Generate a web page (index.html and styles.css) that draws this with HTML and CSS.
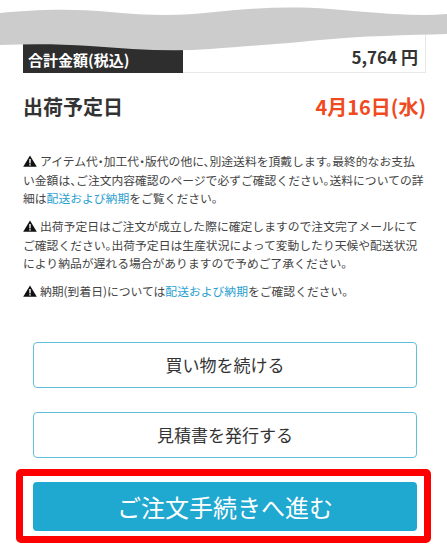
FILE: index.html
```html
<!DOCTYPE html>
<html lang="ja">
<head>
<meta charset="utf-8">
<title>カート</title>
<link rel="stylesheet" href="styles.css">
</head>
<body>
<div class="page">
  <div class="total-row">
    <div class="total-label">合計金額(税込)</div>
    <div class="total-value">5,764 円</div>
  </div>
  <div class="ship-row">
    <div class="ship-label">出荷予定日</div>
    <div class="ship-date">4月16日(水)</div>
  </div>
  <div class="notes">
    <p class="note"><svg class="warn" viewBox="0 0 14 12"><path d="M7 0.4 L13.8 11.8 H0.2 Z" fill="#111"/><rect x="6.3" y="4" width="1.4" height="4.4" fill="#fff"/><rect x="6.3" y="9.2" width="1.4" height="1.4" fill="#fff"/></svg>アイテム代・加工代・版代の他に、別途送料を頂戴します。最終的なお支払<br>い金額は、ご注文内容確認のページで必ずご確認ください。送料についての詳<br>細は<a class="link" href="#">配送および納期</a>をご覧ください。</p>
    <p class="note"><svg class="warn" viewBox="0 0 14 12"><path d="M7 0.4 L13.8 11.8 H0.2 Z" fill="#111"/><rect x="6.3" y="4" width="1.4" height="4.4" fill="#fff"/><rect x="6.3" y="9.2" width="1.4" height="1.4" fill="#fff"/></svg>出荷予定日はご注文が成立した際に確定しますので注文完了メールにて<br>ご確認ください。出荷予定日は生産状況によって変動したり天候や配送状況<br>により納品が遅れる場合がありますので予めご了承ください。</p>
    <p class="note"><svg class="warn" viewBox="0 0 14 12"><path d="M7 0.4 L13.8 11.8 H0.2 Z" fill="#111"/><rect x="6.3" y="4" width="1.4" height="4.4" fill="#fff"/><rect x="6.3" y="9.2" width="1.4" height="1.4" fill="#fff"/></svg>納期(到着日)については<a class="link" href="#">配送および納期</a>をご確認ください。</p>
  </div>
  <div class="actions">
    <button class="btn btn-outline">買い物を続ける</button>
    <button class="btn btn-outline">見積書を発行する</button>
    <button class="btn btn-primary">ご注文手続きへ進む</button>
  </div>
  <svg class="wave" viewBox="0 0 447 60" preserveAspectRatio="none">
    <path d="M0 13 C30 10 70 8 110 12 C150 16 180 16 215 12 C250 8 290 6 330 9 C370 12 410 17 447 14 L447 34 C410 35 360 36 320 40 C280 44 250 46 210 49 C170 52 130 49 90 46 C60 44 30 44 0 45 Z" fill="#cccccc"/>
  </svg>
  <div class="highlight"></div>
</div>
</body>
</html>
```

FILE: styles.css
```css
html, body {
  margin: 0;
  padding: 0;
  background: #ffffff;
}

body {
  font-family: "Noto Sans CJK JP", "Noto Sans", sans-serif;
  color: #333333;
}

.page {
  position: relative;
  width: 447px;
  height: 556px;
  overflow: hidden;
}

.total-row {
  display: grid;
  grid-template-columns: 160px 1fr;
  height: 48px;
  margin: 25px 21px 0 23px;
}

.total-label {
  background: #2e2e2e;
  color: #ffffff;
  font-weight: 700;
  font-size: 15px;
  line-height: 22px;
  padding: 24px 0 0 5px;
}

.total-value {
  border: 1px solid #e8e8e8;
  border-left: none;
  text-align: right;
  font-weight: 700;
  font-size: 17px;
  line-height: 22px;
  padding: 20px 7px 0 0;
  color: #333333;
}

.ship-row {
  display: flex;
  justify-content: space-between;
  margin: 20px 21px 0 23px;
  font-size: 20px;
  line-height: 28px;
  font-weight: 700;
}

.ship-label {
  color: #333333;
}

.ship-date {
  color: #f04a1e;
}

.notes {
  margin: 31px 0 0 23px;
  width: 420px;
}

.note {
  margin: 0;
  font-size: 11.8px;
  line-height: 18.5px;
  color: #444444;
  white-space: nowrap;
  font-feature-settings: "halt";
}

.note + .note {
  margin-top: 9.5px;
}

.warn {
  display: inline-block;
  width: 14px;
  height: 12px;
  margin-right: 3px;
  vertical-align: -1px;
}

.link {
  color: #2aa0cf;
  text-decoration: none;
}

.actions {
  display: flex;
  flex-direction: column;
  gap: 24px;
  margin: 41px 30px 0 33px;
}

.btn {
  font-family: "Noto Sans CJK JP", "Noto Sans", sans-serif;
  border-radius: 4px;
  padding: 0;
  cursor: pointer;
}

.btn-outline {
  height: 46px;
  background: #ffffff;
  border: 1px solid #62c0da;
  color: #333333;
  font-size: 17px;
}

.btn-primary {
  height: 49px;
  background: #1fa8d0;
  border: none;
  color: #ffffff;
  font-size: 24px;
}

.wave {
  position: absolute;
  top: 0;
  left: 0;
  width: 447px;
  height: 60px;
}

.highlight {
  position: absolute;
  left: 16px;
  top: 469px;
  width: 415px;
  height: 74px;
  box-sizing: border-box;
  border: 7px solid #ff0000;
  border-radius: 5px;
}
```
